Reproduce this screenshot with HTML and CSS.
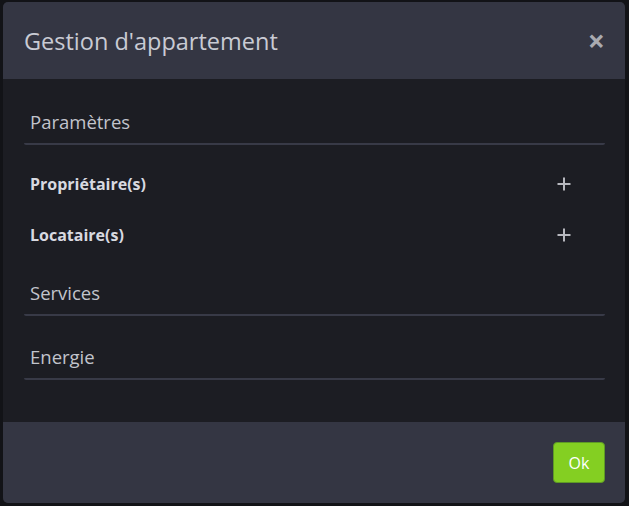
FILE: index.html
```html
<!DOCTYPE html>
<html lang="fr">
<head>
<meta charset="utf-8">
<link rel="stylesheet" href="styles.css">
</head>
<body>
<div class="modal">
  <div class="modal-header">
    <h1 class="title">Gestion d'appartement</h1>
    <span class="close">&times;</span>
  </div>
  <div class="modal-body">
    <div class="section">Paramètres</div>
    <div class="row"><span class="row-label">Propriétaire(s)</span><svg class="plus" width="14" height="14" viewBox="0 0 14 14"><path d="M7 0.5V13.5M0.5 7H13.5" stroke="#b7b8be" stroke-width="2" fill="none"/></svg></div>
    <div class="row"><span class="row-label">Locataire(s)</span><svg class="plus" width="14" height="14" viewBox="0 0 14 14"><path d="M7 0.5V13.5M0.5 7H13.5" stroke="#b7b8be" stroke-width="2" fill="none"/></svg></div>
    <div class="section">Services</div>
    <div class="section">Energie</div>
  </div>
  <div class="modal-footer">
    <button class="btn-ok">Ok</button>
  </div>
</div>
</body>
</html>
```
FILE: styles.css
```css
html, body {
  margin: 0;
  padding: 0;
  background: #121317;
  width: 629px;
  height: 506px;
  overflow: hidden;
  font-family: "Open Sans", "Noto Sans", sans-serif;
}
.modal {
  margin: 2px 4px 0 3px;
  height: 501px;
  border-radius: 5px;
  overflow: hidden;
  display: flex;
  flex-direction: column;
  background: #1c1d23;
}
.modal-header {
  height: 77px;
  flex: none;
  background: #343643;
  display: flex;
  align-items: center;
  justify-content: space-between;
  padding: 0 20px 0 21px;
  box-sizing: border-box;
}
.title {
  margin: 0;
  font-weight: 400;
  font-size: 23.5px;
  color: #c9cbd4;
  letter-spacing: 0;
}
.close {
  color: #a9aab0;
  font-size: 30px;
  font-weight: 700;
  line-height: 1;
}
.modal-body {
  flex: 1;
  padding: 30px 20px 0 21px;
}
.section {
  font-size: 18.5px;
  line-height: 25px;
  color: #c2c4cc;
  padding: 0 0 9px 6px;
  border-bottom: 2px solid #383a47;
  margin-bottom: 28px;
  border-radius: 2px;
}
.section + .row { margin-top: -15px; }
.row {
  display: flex;
  justify-content: space-between;
  align-items: center;
  padding: 0 34px 0 6px;
  height: 51px;
}
.row + .section { margin-top: 20px; }
.row-label {
  font-weight: 700;
  font-size: 16px;
  color: #d8d9e0;
}
.plus {
  display: block;
}
.modal-footer {
  height: 81px;
  flex: none;
  background: #343643;
  display: flex;
  align-items: center;
  justify-content: flex-end;
  padding: 0 20px;
}
.btn-ok {
  width: 52px;
  height: 41px;
  background: #84cf22;
  border: 1px solid #5e9a25;
  border-radius: 4px;
  color: #ffffff;
  font-family: "Open Sans", "Noto Sans", sans-serif;
  font-size: 16px;
}
```
